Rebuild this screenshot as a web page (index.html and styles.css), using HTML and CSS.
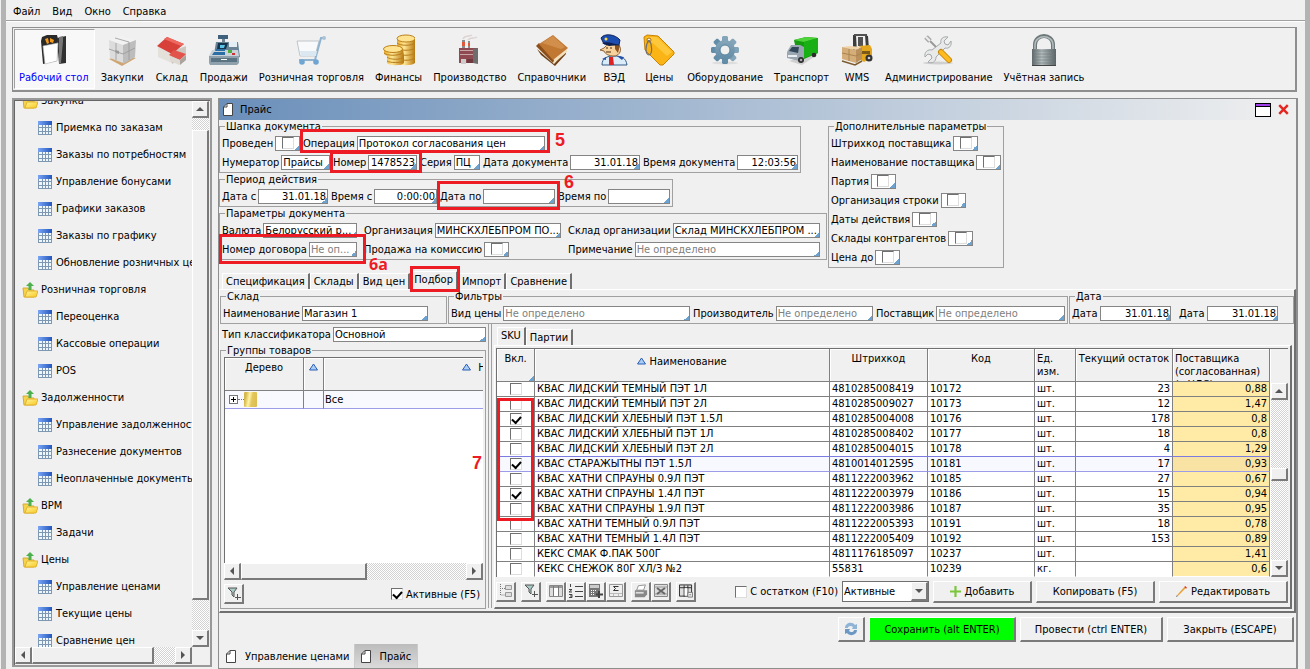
FILE: index.html
```
<!DOCTYPE html>
<html lang="ru">
<head>
  <meta charset="utf-8">
  <title>Прайс</title>
  <link rel="stylesheet" href="styles.css">
</head>
<body>
  <!-- icon set -->
  <svg class="defs" aria-hidden="true">
    <defs>
      <linearGradient id="gold" x1="0" x2="1"><stop offset="0" stop-color="#e9a92c"/><stop offset=".4" stop-color="#ffe694"/><stop offset="1" stop-color="#b8780f"/></linearGradient>
      <linearGradient id="steel" x1="0" x2="1"><stop offset="0" stop-color="#5d6668"/><stop offset=".4" stop-color="#b4bcbe"/><stop offset="1" stop-color="#596264"/></linearGradient>
      <linearGradient id="tableTop" x1="0" x2="1"><stop offset="0" stop-color="#79a5f5"/><stop offset="1" stop-color="#2457bd"/></linearGradient>
      <linearGradient id="folderFill" x1="0" x2="1" y2="1"><stop offset="0" stop-color="#fff59a"/><stop offset="1" stop-color="#f7c81e"/></linearGradient>
      <linearGradient id="gearFill" y2="1" x2="0"><stop offset="0" stop-color="#86a6ba"/><stop offset="1" stop-color="#5f8ba6"/></linearGradient>
    </defs>
    <symbol id="i-desk" viewBox="0 0 32 32">
      <path d="M3 7l1-4 5-2h10l1 4-1 22-14 3z" fill="#2a2a2a"/><path d="M19 4l9-2v27l-7 1z" fill="#303030"/><path d="M21 3l4-1v5l-2 22-2 1z" fill="#777"/>
      <path d="M5 12l15-3-1 18L7 30z" fill="#fff" stroke="#bbb" stroke-width=".6"/><path d="M7 5l3-1 1 5-2 1zM12 4l4 2-1 3-3-1z" fill="#f39a1c"/>
    </symbol>
    <symbol id="i-box" viewBox="0 0 32 32">
      <path d="M3 25l13-4 14 3-14 8z" fill="#cfa673"/><path d="M3 6l13-4 14 4-13 5z" fill="#f2f2f2"/><path d="M3 6l14 5v18L4 24z" fill="#dcdcdc"/><path d="M17 11l13-5-1 17-12 7z" fill="#bdbdbd"/>
      <path d="M3 15l14 5 12-6M10 9v17M9 4l14 4v18" fill="none" stroke="#979797" stroke-width=".8"/><path d="M9 16l4 1v3l-3-1z" fill="#999"/>
    </symbol>
    <symbol id="i-house" viewBox="0 0 32 32">
      <path d="M2 12l14 7v10L2 23z" fill="#e4e0da"/><path d="M14 18l16-6v10l-14 8z" fill="#cdc7bf"/><path d="M1 12L11 3l17 7-12 10z" fill="#d8403a"/><path d="M11 3l17 7-3 2L8 5z" fill="#ee6a60"/>
      <path d="M13 21l5-5 12 4-6 6z" fill="#e2544b"/><path d="M14 22l10 4 6-5v5l-7 5-9-4z" fill="#dedad3"/><path d="M24 26l6-5v5l-6 5z" fill="#aaa49c"/>
    </symbol>
    <symbol id="i-cash" viewBox="0 0 32 32">
      <path d="M10 1h10v4H10z" fill="#3f617b"/><path d="M14 5h3v4h-3z" fill="#6f8494"/><path d="M8 8h22l2 15-8 2-18-5z" fill="#6a8496"/><path d="M10 9h10l-2 6H9z" fill="#16344b"/><path d="M12 11h5l-1 3h-4z" fill="#5bc3ea"/><path d="M21 8h8v5h-8z" fill="#e4eef4"/>
      <path d="M4 16h26l1 6H1z" fill="#c8d2d8"/><path d="M6 18h11v3H4zM8 15h9v2H7z" fill="#2b6fa5"/><path d="M20 16h4v3h-4z" fill="#4fae3d"/><path d="M24 19h3v2h-3z" fill="#c33"/><path d="M1 22h30v7l-2 2H2l-1-2z" fill="#8fa1ac"/><path d="M3 24h26v4H3z" fill="#5b7484"/><path d="M13 25h6v1h-6z" fill="#fff"/>
    </symbol>
    <symbol id="i-cart" viewBox="0 0 32 32">
      <path d="M2 7h22l-4 15H5z" fill="#f8f9fa" stroke="#c0c6ca"/><path d="M30 4h-4l-6 22H4" fill="none" stroke="#8fb3cf" stroke-width="2"/><path d="M5 17h17l-1 5H6z" fill="#dbe8f2"/>
      <circle cx="7" cy="28" r="2.8" fill="#6ea5d2"/><circle cx="21" cy="28" r="2.8" fill="#6ea5d2"/><circle cx="29" cy="4" r="2" fill="#a9c4d8"/>
    </symbol>
    <symbol id="i-coins" viewBox="0 0 32 32">
      <path d="M14 5v24c3 3 15 3 18 0V5z" fill="url(#gold)"/><ellipse cx="23" cy="4.500" rx="9" ry="3.500" fill="#ffe391" stroke="#bb8018"/><path d="M14 9c3 3 15 3 18 0M14 14c3 3 15 3 18 0M14 19c3 3 15 3 18 0M14 24c3 3 15 3 18 0" fill="none" stroke="#b57e1c"/>
      <path d="M1 15v5l3 2v7c3 3 14 3 17 0v-7l-1-7z" fill="url(#gold)"/><ellipse cx="10" cy="15" rx="9.500" ry="3.500" fill="#ffe391" stroke="#bb8018"/><path d="M1 19c3 3 15 3 18 0M4 23c3 3 14 3 17 0M4 27c3 2 14 2 17 0" fill="none" stroke="#b57e1c"/>
    </symbol>
    <symbol id="i-factory" viewBox="0 0 32 32">
      <path d="M9 5c2-4 6-2 9-4M14 6c2-3 6-1 9-3" fill="none" stroke="#ddd3d3" stroke-width="1.500"/><path d="M8 6h3v9H8zM14 7h2v8h-2z" fill="#8b8b8b"/><path d="M8 8h3v4H8zM14 9h2v3h-2z" fill="#e1573a"/><path d="M5 14h19v15H5z" fill="#8e4a50"/><path d="M19 15l5-1v16l-5-1z" fill="#6d6d6d"/>
      <path d="M6 16h13v1H6zM6 20h13v1H6z" fill="#c9a5a8"/><path d="M7 25h5v5H7z" fill="#ccc"/><path d="M13 25h6v4h-6z" fill="#6e3a40"/>
    </symbol>
    <symbol id="i-book" viewBox="0 0 32 32">
      <path d="M1 15l17 15 12-13v3L19 32 5 21z" fill="#704016"/><path d="M2 11l15 15 14-11v3L18 29 2 15z" fill="#f4dfbb"/><path d="M0 12l3-3 15 17-1 3z" fill="#8b4f1b"/><path d="M3 10L17 1l15 13-15 12z" fill="#c07833"/><path d="M6 9l11-7 12 11-4 2z" fill="#d28f4c"/>
    </symbol>
    <symbol id="i-officer" viewBox="0 0 32 32">
      <path d="M4 31c0-7 5-9 12-9 8 0 12 2 13 9z" fill="#d9ecf8" stroke="#355b86"/><path d="M8 12c0-2 14-2 14 1 2 5-2 9-6 9-5 0-9-2-10-5l-4-1 4-2z" fill="#f8d29b" stroke="#754a1e" stroke-width=".8"/><path d="M17 10l5 1-2 8-3-4z" fill="#8b531e"/><path d="M3 4c3-5 14-4 19 2l-1 5-15-1z" fill="#1c4eb0" stroke="#10265e"/><path d="M4 9c5-2 11 0 16 2l-9 1z" fill="#0d1f4f"/><circle cx="8" cy="5" r="1.500" fill="#ffd84a"/>
      <path d="M11 23h4l1 8h-5z" fill="#d22"/><path d="M19 22l7 1-2 3zM4 25l4-2v3z" fill="#224fa8"/><path d="M8 14h2M12 14h2M8 18h5" stroke="#4a2a10"/>
    </symbol>
    <symbol id="i-tag" viewBox="0 0 32 32">
      <path d="M1 3l3-2 11 1 16 16v2L20 31h-3L2 16z" fill="#fbb415" stroke="#c98206"/><path d="M3 3h11l15 15-5 4z" fill="#ffd04a" opacity=".7"/><circle cx="6" cy="6" r="2" fill="#fff" stroke="#a56d08"/><path d="M6 6c3 4 4 14 0 15-4-1-4-10 0-15" fill="none" stroke="#6e6e6e" stroke-width="1.200"/>
    </symbol>
    <symbol id="i-gear" viewBox="0 0 32 32">
      <ellipse cx="16" cy="29" rx="13" ry="1.500" fill="#ddd"/>
      <g fill="url(#gearFill)"><path d="M13 3l1-1h4l1 1v26l-1 1h-4l-1-1z"/><path d="M13 3l1-1h4l1 1v26l-1 1h-4l-1-1z" transform="rotate(45 16 16)"/><path d="M13 3l1-1h4l1 1v26l-1 1h-4l-1-1z" transform="rotate(90 16 16)"/><path d="M13 3l1-1h4l1 1v26l-1 1h-4l-1-1z" transform="rotate(135 16 16)"/><circle cx="16" cy="16" r="10"/></g>
      <circle cx="16" cy="16" r="5" fill="#f0f0f0" stroke="#5a839d"/>
    </symbol>
    <symbol id="i-truck" viewBox="0 0 32 32">
      <path d="M3 27l13 4 15-10-3-2z" fill="#cfcfcf"/><path d="M8 6l12-3 12 1v15l-14 6-8-9z" fill="#159a12"/><path d="M8 6l12-3 12 1-14 4z" fill="#4fd33a"/><path d="M18 8l14-4v15l-14 5z" fill="#19b016"/>
      <path d="M1 18l4-7h9l4 2v11l-5 3-12-3z" fill="#9aa7b2"/><path d="M3 17l3-4h7l-1 6z" fill="#33475a"/><path d="M2 21h9v2H2z" fill="#e7edf1"/><circle cx="15" cy="26" r="3" fill="#2d2d2d"/><circle cx="15" cy="26" r="1.300" fill="#aaa"/><circle cx="28" cy="21" r="2.300" fill="#2d2d2d"/>
    </symbol>
    <symbol id="i-lift" viewBox="0 0 32 32">
      <path d="M12 1h3l1 18h-4zM24 1l3 1 1 13h-3z" fill="#3c3c3c"/><path d="M13 0h13v2H13zM17 3h5v9h-5z" fill="#525252"/><path d="M18 12l11-1 2 4v9l-8 4-5-3z" fill="#e3a61d"/><path d="M20 17h9v3h-9z" fill="#7a5a17"/><circle cx="28" cy="24" r="3.500" fill="#333"/><circle cx="28" cy="24" r="1.300" fill="#ccc"/>
      <path d="M1 13l8-1 12 1-6 3z" fill="#f0d3a7"/><path d="M1 13l14 3v13L1 25z" fill="#d5ad79"/><path d="M15 16l6-3v12l-6 4z" fill="#b98f5b"/><path d="M1 19l14 3 6-3M8 15v12" stroke="#a98450" fill="none"/><path d="M1 27l13 4 7-4" stroke="#7c5a2e" fill="none" stroke-width="1.500"/>
    </symbol>
    <symbol id="i-tools" viewBox="0 0 32 32">
      <ellipse cx="15" cy="29" rx="15" ry="1.500" fill="#cfcfcf"/><path d="M5 5l13 13" stroke="#999" stroke-width="2"/><path d="M3 3l4 4" stroke="#aaa" stroke-width="5"/><path d="M3 3l4 4" stroke="#eee" stroke-width="2"/>
      <path d="M25 3l-4 4 1 3 3 1 3-4c1 5-2 8-6 7l-9 9c0 5-4 7-8 5l4-4-1-3-3-1-3 3c-1-5 3-8 7-7l9-7c-1-4 2-7 7-6z" fill="#e8e9e9" stroke="#a4a8aa"/><path d="M18 18l8 8" stroke="#c78607" stroke-width="6" stroke-linecap="round"/><path d="M18 18l8 8" stroke="#fdbb20" stroke-width="4" stroke-linecap="round"/>
    </symbol>
    <symbol id="i-lock" viewBox="0 0 32 32">
      <path d="M7 17v-6c0-12 18-12 18 0v6" fill="none" stroke="#6e787a" stroke-width="4"/><path d="M7 17v-6c0-11 18-11 18 0v6" fill="none" stroke="#b3bcbd" stroke-width="1.500"/><path d="M4 15h24v17H4z" fill="url(#steel)"/><path d="M4 17h24M4 20h24M4 23h24M4 26h24M4 29h24" stroke="#6d7779" opacity=".55"/><path d="M4 31h24v1H4z" fill="#444"/>
    </symbol>
    <symbol id="i-folder" viewBox="0 0 16 16">
      <path d="M1 6h5l1 2h5v7H2z" fill="#f5d34a" stroke="#d9aa32"/><path d="M3 15l2-6h11l-2 6z" fill="url(#folderFill)" stroke="#e3b430"/><path d="M8 0l4 4H9.500v4h-3V4H4z" fill="#4db04c"/>
    </symbol>
    <symbol id="i-table" viewBox="0 0 14 14">
      <path d="M0 0h14v14H0z" fill="#7e98b4"/><path d="M0 0h14v4H0z" fill="url(#tableTop)"/><path d="M1 4h3v2H1zM5 4h2v2H5zM8 4h2v2H8zM11 4h2v2h-2zM1 7h3v3H1zM5 7h2v3H5zM8 7h2v3H8zM11 7h2v3h-2zM1 11h3v2H1zM5 11h2v2H5zM8 11h2v2H8zM11 11h2v2h-2z" fill="#eef7fb"/>
    </symbol>
    <symbol id="i-page" viewBox="0 0 10 13"><path d="M4 .5h5.500v12H.5V4z" fill="#fff" stroke="#444"/><path d="M4 .5V4H.5" fill="none" stroke="#444"/></symbol>
    <symbol id="i-sort" viewBox="0 0 9 8"><path d="M4.500 1L8.500 7h-8z" fill="#a9cdf6" stroke="#2d5fb4"/></symbol>
    <symbol id="i-funnel" viewBox="0 0 14 14"><path d="M1 1h9L7 5v5L5 8V5z" fill="#a9cbc8" stroke="#555"/><path d="M10.500 7v6M8 10.500h6" stroke="#555"/></symbol>
    <symbol id="i-tree" viewBox="0 0 14 14"><path d="M1.500 0v11H6M1 4.500h5" fill="none" stroke="#777" stroke-dasharray="1 1"/><path d="M6.500 1.500h6v4h-6zM6.500 8.500h6v4h-6z" fill="#ddd" stroke="#999"/></symbol>
    <symbol id="i-cols" viewBox="0 0 14 14"><path d="M.5 1.500h13v11H.5z" fill="#ddd" stroke="#888"/><path d="M1 2h12v2H1z" fill="#999"/><path d="M5 4h4v8H5z" fill="#fff"/><path d="M4.500 2v10M9.500 2v10" stroke="#777"/></symbol>
    <symbol id="i-list" viewBox="0 0 14 14"><path d="M6 2.500h8M6 7.500h8M6 12.500h8M1.500 0v3M0 5.500h3L0 8h3M0 10.500h3v3H0M1 12h2" fill="none" stroke="#444"/></symbol>
    <symbol id="i-calc" viewBox="0 0 14 14"><path d="M0 0h11v13H0z" fill="#777"/><path d="M1 1h9v3H1z" fill="#ccc"/><path d="M2 6h1v1H2zM4 6h1v1H4zM6 6h1v1H6zM2 8h1v1H2zM4 8h1v1H4zM2 10h1v1H2zM4 10h1v1H4z" fill="#fff"/><path d="M10 7v7M7 10.500h7" stroke="#444" stroke-width="2"/></symbol>
    <symbol id="i-sum" viewBox="0 0 14 14"><path d="M.5.5h13v12H.5z" fill="#eee" stroke="#999"/><path d="M1 9.500h12M4.500 9v3M9.500 9v3" stroke="#bbb"/><path d="M9.500 2.500h-5l2 2-2 2h5" fill="none" stroke="#333"/></symbol>
    <symbol id="i-print" viewBox="0 0 16 14"><path d="M5 1l8-1-2 6H3z" fill="#fff" stroke="#888"/><path d="M1 6h14v5l-3 3H1z" fill="#888"/><path d="M2 8h9v2H2z" fill="#ddd"/></symbol>
    <symbol id="i-xls" viewBox="0 0 14 14"><path d="M.5.500h13v12H.5z" fill="#ddd" stroke="#888"/><path d="M1 3h12M1 10h12" stroke="#999"/><path d="M3 4l8 6M11 4l-8 6" stroke="#666" stroke-width="2"/></symbol>
    <symbol id="i-grid" viewBox="0 0 15 14"><path d="M.5.500h13v12H.5z" fill="#ddd" stroke="#222"/><path d="M1 3.500h12M5.500 1v12M9.500 1v12" stroke="#222"/><path d="M6 4h3v8H6z" fill="#fff"/><path d="M9.500 8.500h5v5h-5z" fill="#eee" stroke="#777"/><path d="M11 11h2" stroke="#777"/></symbol>
    <symbol id="i-plus" viewBox="0 0 10 10"><path d="M4 0h2v4h4v2H6v4H4V6H0V4h4z" fill="#7cc63c"/></symbol>
    <symbol id="i-pencil" viewBox="0 0 12 12"><path d="M1 11l1-2 7-8 2 1-8 8z" fill="#e8a33a"/><path d="M9 1l1-1 2 2-1 1z" fill="#d33"/><path d="M0 12l1-2 1 1z" fill="#444"/></symbol>
    <symbol id="i-refresh" viewBox="0 0 14 14"><path d="M1 6c0-5 7-7 10-3l2-1v5H8l1-2C7 3 4 4 4 6z" fill="#8fb4d6"/><path d="M13 8c0 5-7 7-10 3l-2 1V7h5L5 9c2 2 5 1 5-1z" fill="#6c98c4"/></symbol>
  </svg>

  <div class="window">
    <nav class="menubar">
      <a href="#">Файл</a>
      <a href="#">Вид</a>
      <a href="#">Окно</a>
      <a href="#">Справка</a>
    </nav>

    <div class="toolbar">
      <button class="tool active"><svg><use href="#i-desk"/></svg>Рабочий стол</button>
      <button class="tool"><svg><use href="#i-box"/></svg>Закупки</button>
      <button class="tool"><svg><use href="#i-house"/></svg>Склад</button>
      <button class="tool"><svg><use href="#i-cash"/></svg>Продажи</button>
      <button class="tool"><svg><use href="#i-cart"/></svg>Розничная торговля</button>
      <button class="tool"><svg><use href="#i-coins"/></svg>Финансы</button>
      <button class="tool"><svg><use href="#i-factory"/></svg>Производство</button>
      <button class="tool"><svg><use href="#i-book"/></svg>Справочники</button>
      <button class="tool"><svg><use href="#i-officer"/></svg>ВЭД</button>
      <button class="tool"><svg><use href="#i-tag"/></svg>Цены</button>
      <button class="tool"><svg><use href="#i-gear"/></svg>Оборудование</button>
      <button class="tool"><svg><use href="#i-truck"/></svg>Транспорт</button>
      <button class="tool"><svg><use href="#i-lift"/></svg>WMS</button>
      <button class="tool"><svg><use href="#i-tools"/></svg>Администрирование</button>
      <button class="tool"><svg><use href="#i-lock"/></svg>Учётная запись</button>
    </div>

    <div class="workspace">
      <aside class="sidebar">
        <ul class="tree">
          <li class="folder"><svg><use href="#i-folder"/></svg>Закупка</li>
          <li><svg><use href="#i-table"/></svg>Приемка по заказам</li>
          <li><svg><use href="#i-table"/></svg>Заказы по потребностям</li>
          <li><svg><use href="#i-table"/></svg>Управление бонусами</li>
          <li><svg><use href="#i-table"/></svg>Графики заказов</li>
          <li><svg><use href="#i-table"/></svg>Заказы по графику</li>
          <li><svg><use href="#i-table"/></svg>Обновление розничных цен</li>
          <li class="folder"><svg><use href="#i-folder"/></svg>Розничная торговля</li>
          <li><svg><use href="#i-table"/></svg>Переоценка</li>
          <li><svg><use href="#i-table"/></svg>Кассовые операции</li>
          <li><svg><use href="#i-table"/></svg>POS</li>
          <li class="folder"><svg><use href="#i-folder"/></svg>Задолженности</li>
          <li><svg><use href="#i-table"/></svg>Управление задолженностью</li>
          <li><svg><use href="#i-table"/></svg>Разнесение документов</li>
          <li><svg><use href="#i-table"/></svg>Неоплаченные документы</li>
          <li class="folder"><svg><use href="#i-folder"/></svg>BPM</li>
          <li><svg><use href="#i-table"/></svg>Задачи</li>
          <li class="folder"><svg><use href="#i-folder"/></svg>Цены</li>
          <li><svg><use href="#i-table"/></svg>Управление ценами</li>
          <li><svg><use href="#i-table"/></svg>Текущие цены</li>
          <li><svg><use href="#i-table"/></svg>Сравнение цен</li>
        </ul>
        <div class="scroll vertical side-v"><button class="arrow up" aria-label="Вверх"></button><div class="track"><div class="thumb"></div></div><button class="arrow down" aria-label="Вниз"></button></div>
        <div class="scroll side-h"><button class="arrow left" aria-label="Влево"></button><div class="track"><div class="thumb"></div></div><button class="arrow right" aria-label="Вправо"></button></div>
      </aside>

      <main class="document">
        <header class="titlebar">
          <svg class="page-icon"><use href="#i-page"/></svg>
          <span>Прайс</span>
          <button class="maximize" aria-label="Развернуть"></button>
          <button class="close" aria-label="Закрыть"><svg viewBox="0 0 9 9"><path d="M1 1l7 7M8 1L1 8" stroke="#e5261f" stroke-width="2"/></svg></button>
        </header>

        <div class="forms">
          <div class="forms-left">
            <fieldset class="fit">
              <legend>Шапка документа</legend>
              <div class="row">
                <label class="field f-posted">Проведен <span class="checkfield"><input type="checkbox"></span></label>
                <label class="field f-operation">Операция <input type="text" value="Протокол согласования цен"></label>
              </div>
              <div class="row">
                <label class="field f-numerator">Нумератор <input type="text" value="Прайсы"></label>
                <label class="field f-number">Номер <input type="text" class="right" value="1478523"></label>
                <label class="field f-series">Серия <input type="text" value="ПЦ"></label>
                <label class="field f-docdate">Дата документа <input type="text" class="right" value="31.01.18"></label>
                <label class="field f-doctime">Время документа <input type="text" class="right" value="12:03:56"></label>
              </div>
            </fieldset>
            <fieldset class="fit">
              <legend>Период действия</legend>
              <div class="row">
                <label class="field f-from">Дата с <input type="text" class="right" value="31.01.18"></label>
                <label class="field f-from">Время с <input type="text" class="right" value="0:00:00"></label>
                <label class="field f-todate">Дата по <input type="text"></label>
                <label class="field f-totime">Время по <input type="text"></label>
              </div>
            </fieldset>
            <fieldset>
              <legend>Параметры документа</legend>
              <div class="params">
                <label class="field">Валюта <input type="text" value="Белорусский р..."></label>
                <label class="field">Организация <input type="text" value="МИНСКХЛЕБПРОМ ПО..."></label>
                <label class="field">Склад организации <input type="text" value="Склад МИНСКХЛЕБПРОМ ..."></label>
                <label class="field">Номер договора <input type="text" placeholder="Не оп..."></label>
                <label class="field">Продажа на комиссию <span class="checkfield"><input type="checkbox"></span></label>
                <label class="field">Примечание <input type="text" placeholder="Не определено"></label>
              </div>
            </fieldset>
          </div>
          <fieldset class="extra">
            <legend>Дополнительные параметры</legend>
            <div class="row"><label class="field">Штрихкод поставщика <span class="checkfield"><input type="checkbox"></span></label></div>
            <div class="row"><label class="field">Наименование поставщика <span class="checkfield"><input type="checkbox"></span></label></div>
            <div class="row"><label class="field">Партия <span class="checkfield"><input type="checkbox"></span></label></div>
            <div class="row"><label class="field">Организация строки <span class="checkfield"><input type="checkbox"></span></label></div>
            <div class="row"><label class="field">Даты действия <span class="checkfield"><input type="checkbox"></span></label></div>
            <div class="row"><label class="field">Склады контрагентов <span class="checkfield"><input type="checkbox"></span></label></div>
            <div class="row"><label class="field">Цена до <span class="checkfield"><input type="checkbox"></span></label></div>
          </fieldset>
        </div>

        <div class="tabs">
          <button>Спецификация</button>
          <button>Склады</button>
          <button>Вид цен</button>
          <button class="selected">Подбор</button>
          <button>Импорт</button>
          <button>Сравнение</button>
        </div>

        <section class="panel">
          <div class="filters">
            <fieldset class="g-store">
              <legend>Склад</legend>
              <div class="row"><label class="field">Наименование <input type="text" value="Магазин 1"></label></div>
            </fieldset>
            <fieldset class="g-filters">
              <legend>Фильтры</legend>
              <div class="row">
                <label class="field f-price">Вид цены <input type="text" placeholder="Не определено"></label>
                <label class="field f-maker">Производитель <input type="text" placeholder="Не определено"></label>
                <label class="field f-supplier">Поставщик <input type="text" placeholder="Не определено"></label>
              </div>
            </fieldset>
            <fieldset class="g-dates">
              <legend>Дата</legend>
              <div class="row">
                <label class="field">Дата <input type="text" class="right" value="31.01.18"></label>
                <label class="field">Дата <input type="text" class="right" value="31.01.18"></label>
              </div>
            </fieldset>
          </div>

          <div class="split">
            <div class="groups-pane">
              <div class="row"><label class="field">Тип классификатора <input type="text" value="Основной"></label></div>
              <fieldset class="groups">
                <legend>Группы товаров</legend>
                <div class="groups-body">
                  <div class="groups-view">
                    <table class="groups-table">
                      <thead><tr><th class="c-tree">Дерево</th><th class="c-sort"><svg class="sort"><use href="#i-sort"/></svg></th><th class="c-title"><svg class="sort"><use href="#i-sort"/></svg> Наименование</th></tr></thead>
                      <tbody><tr><td><span class="node"><i class="expander"></i><i class="dots"></i><i class="folder-icon"></i></span></td><td></td><td>Все</td></tr></tbody>
                    </table>
                  </div>
                  <div class="scroll groups-h"><button class="arrow left" aria-label="Влево"></button><div class="track"><div class="thumb"></div></div><button class="arrow right" aria-label="Вправо"></button></div>
                  <div class="groups-bar">
                    <button class="icon-btn" aria-label="Фильтр"><svg><use href="#i-funnel"/></svg></button>
                    <label class="check"><input type="checkbox" checked> Активные (F5)</label>
                  </div>
                </div>
              </fieldset>
            </div>
            <div class="splitter"></div>
            <div class="sku-pane">
              <div class="tabs small">
                <button class="selected">SKU</button>
                <button>Партии</button>
              </div>
              <div class="sku-body">
                <div class="sku-view">
                  <table class="sku">
                    <colgroup><col class="w-on"><col><col class="w-code"><col class="w-id"><col class="w-unit"><col class="w-rest"><col class="w-rest"></colgroup>
                    <thead>
                      <tr>
                        <th class="filtered">Вкл.</th>
                        <th class="name"><svg class="sort"><use href="#i-sort"/></svg> Наименование</th>
                        <th>Штрихкод</th><th>Код</th><th class="l">Ед.<br>изм.</th><th>Текущий остаток</th><th class="l">Поставщика (согласованная) (с НДС)</th>
                      </tr>
                    </thead>
                    <tbody>
                      <tr><td><input type="checkbox" aria-label="Вкл."></td><td>КВАС ЛИДСКИЙ ТЕМНЫЙ ПЭТ 1Л</td><td>4810285008419</td><td>10172</td><td>шт.</td><td>23</td><td>0,88</td></tr>
                      <tr><td><input type="checkbox" aria-label="Вкл."></td><td>КВАС ЛИДСКИЙ ТЕМНЫЙ ПЭТ 2Л</td><td>4810285009027</td><td>10173</td><td>шт.</td><td>12</td><td>1,47</td></tr>
                      <tr><td><input type="checkbox" aria-label="Вкл." checked></td><td>КВАС ЛИДСКИЙ ХЛЕБНЫЙ ПЭТ 1.5Л</td><td>4810285004008</td><td>10176</td><td>шт.</td><td>178</td><td>0,8</td></tr>
                      <tr><td><input type="checkbox" aria-label="Вкл."></td><td>КВАС ЛИДСКИЙ ХЛЕБНЫЙ ПЭТ 1Л</td><td>4810285008402</td><td>10177</td><td>шт.</td><td>18</td><td>0,8</td></tr>
                      <tr><td><input type="checkbox" aria-label="Вкл."></td><td>КВАС ЛИДСКИЙ ХЛЕБНЫЙ ПЭТ 2Л</td><td>4810285004015</td><td>10178</td><td>шт.</td><td>4</td><td>1,29</td></tr>
                      <tr class="current"><td><input type="checkbox" aria-label="Вкл." checked></td><td>КВАС СТАРАЖЫТНЫ ПЭТ 1.5Л</td><td>4810014012595</td><td>10181</td><td>шт.</td><td>17</td><td>0,93</td></tr>
                      <tr><td><input type="checkbox" aria-label="Вкл."></td><td>КВАС ХАТНИ СПРАУНЫ 0.9Л ПЭТ</td><td>4811222003962</td><td>10185</td><td>шт.</td><td>27</td><td>0,67</td></tr>
                      <tr><td><input type="checkbox" aria-label="Вкл." checked></td><td>КВАС ХАТНИ СПРАУНЫ 1.4Л ПЭТ</td><td>4811222003979</td><td>10186</td><td>шт.</td><td>15</td><td>0,94</td></tr>
                      <tr><td><input type="checkbox" aria-label="Вкл."></td><td>КВАС ХАТНИ СПРАУНЫ 1.9Л ПЭТ</td><td>4811222003986</td><td>10187</td><td>шт.</td><td>35</td><td>0,95</td></tr>
                      <tr><td><input type="checkbox" aria-label="Вкл."></td><td>КВАС ХАТНИ ТЕМНЫЙ 0.9Л ПЭТ</td><td>4811222005393</td><td>10191</td><td>шт.</td><td>18</td><td>0,78</td></tr>
                      <tr><td><input type="checkbox" aria-label="Вкл."></td><td>КВАС ХАТНИ ТЕМНЫЙ 1.4Л ПЭТ</td><td>4811222005409</td><td>10192</td><td>шт.</td><td>153</td><td>0,89</td></tr>
                      <tr><td><input type="checkbox" aria-label="Вкл."></td><td>КЕКС СМАК Ф.ПАК 500Г</td><td>4811176185097</td><td>10237</td><td>шт.</td><td></td><td>1,41</td></tr>
                      <tr><td><input type="checkbox" aria-label="Вкл."></td><td>КЕКС СНЕЖОК 80Г ХЛ/З №2</td><td>55831</td><td>10239</td><td>кг.</td><td></td><td>0,6</td></tr>
                    </tbody>
                  </table>
                  <div class="scroll vertical sku-v"><button class="arrow up" aria-label="Вверх"></button><div class="track"><div class="thumb"></div></div><button class="arrow down" aria-label="Вниз"></button></div>
                </div>
                <div class="sku-bar">
                  <div class="btn-group"><button class="icon-btn" aria-label="Дерево"><svg><use href="#i-tree"/></svg></button></div>
                  <div class="btn-group"><button class="icon-btn" aria-label="Фильтр"><svg><use href="#i-funnel"/></svg></button></div>
                  <div class="btn-group">
                    <button class="icon-btn" aria-label="Колонки"><svg><use href="#i-cols"/></svg></button>
                    <button class="icon-btn" aria-label="Количество"><svg><use href="#i-list"/></svg></button>
                    <button class="icon-btn" aria-label="Расчет"><svg><use href="#i-calc"/></svg></button>
                    <button class="icon-btn" aria-label="Сумма"><svg><use href="#i-sum"/></svg></button>
                  </div>
                  <div class="btn-group">
                    <button class="icon-btn" aria-label="Печать"><svg><use href="#i-print"/></svg></button>
                    <button class="icon-btn" aria-label="Excel"><svg><use href="#i-xls"/></svg></button>
                  </div>
                  <div class="btn-group"><button class="icon-btn" aria-label="Настройка"><svg><use href="#i-grid"/></svg></button></div>
                  <label class="check push"><input type="checkbox"> С остатком (F10)</label>
                  <span class="combo"><select aria-label="Показать"><option>Активные</option></select><span class="arrow down"></span></span>
                  <button class="btn b-add"><svg class="btn-icon"><use href="#i-plus"/></svg>Добавить</button>
                  <button class="btn b-copy">Копировать (F5)</button>
                  <button class="btn b-edit"><svg class="btn-icon"><use href="#i-pencil"/></svg>Редактировать</button>
                </div>
              </div>
            </div>
          </div>
        </section>

        <div class="actions">
          <button class="btn b-refresh" aria-label="Обновить"><svg><use href="#i-refresh"/></svg></button>
          <button class="btn b-save">Сохранить (alt ENTER)</button>
          <button class="btn b-post">Провести (ctrl ENTER)</button>
          <button class="btn b-close">Закрыть (ESCAPE)</button>
        </div>
        <div class="pages">
          <button><svg class="page-icon"><use href="#i-page"/></svg>Управление ценами</button>
          <button class="selected"><svg class="page-icon"><use href="#i-page"/></svg>Прайс</button>
        </div>

        <!-- callouts over the form -->
        <div class="mark m-operation"></div><b class="num n-5">5</b>
        <div class="mark m-number"></div>
        <div class="mark m-dateto"></div><b class="num n-6">6</b>
        <div class="mark m-contract"></div><b class="num n-6a">6а</b>
        <div class="mark m-tab"></div>
        <div class="mark m-checks"></div><b class="num n-7">7</b>
      </main>
    </div>
  </div>
</body>
</html>
```

FILE: styles.css
```
* {
  box-sizing: border-box;
}

body {
  margin: 0;
  height: 100vh;
  overflow: hidden;
  background: #f0f0f0;
  color: #000;
  font: 11px/13px "DejaVu Sans Condensed", "DejaVu Sans", sans-serif;
}

button, input, select {
  font: inherit;
  color: inherit;
  margin: 0;
}

button {
  border: 0;
  padding: 0;
  background: none;
}

.defs {
  position: absolute;
  width: 0;
  height: 0;
}

.window {
  display: flex;
  flex-direction: column;
  height: 100vh;
  margin-left: 1px;
  border-left: 5px solid #b3b3b3;
  border-right: 5px solid #b3b3b3;
}

/* menu */
.menubar {
  display: flex;
  gap: 12px;
  height: 21px;
  padding: 5px 7px 0;
  border-bottom: 1px solid #a0a0a0;
  box-shadow: 0 1px 0 #fff;
}

.menubar a {
  color: #000;
  text-decoration: none;
}

/* main toolbar */
.toolbar {
  display: flex;
  height: 65px;
  margin: 6px 8px 6px 6px;
  padding: 1px;
  border: 1px solid #8e8e8e;
  border-right-width: 2px;
  border-bottom-width: 2px;
  flex-shrink: 0;
}

.tool {
  display: flex;
  flex-direction: column;
  align-items: center;
  gap: 5px;
  min-width: 45px;
  padding: 5px 5px 0 6px;
  white-space: nowrap;
}

.tool svg {
  width: 32px;
  height: 32px;
}

.tool.active {
  color: #00f;
  background: #f8f8f8;
  border: 1px solid #a0a0a0;
  border-right-color: #fff;
  border-bottom-color: #fff;
  padding: 4px 5px 0 4px;
}

.workspace {
  display: flex;
  gap: 6px;
  flex: 1;
  min-height: 0;
  margin: 0 7px 0 6px;
}

/* sidebar */
.sidebar {
  display: grid;
  grid-template: 1fr 17px / 1fr 17px;
  width: 200px;
  flex-shrink: 0;
  margin-bottom: 2px;
  border: 2px solid #999;
  box-shadow: inset 1px 1px 0 #666;
  padding: 1px;
}

.tree {
  overflow: hidden;
  margin: 0;
  padding: 0;
  list-style: none;
}

.tree li {
  display: flex;
  align-items: center;
  gap: 4px;
  height: 27px;
  padding-left: 23px;
  white-space: nowrap;
}

.tree li:first-child {
  margin-top: -14px;
}

.tree li.folder {
  gap: 3px;
  padding-left: 7px;
}

.tree svg {
  flex: none;
  width: 14px;
  height: 14px;
}

.tree .folder svg {
  width: 16px;
  height: 16px;
}

/* scrollbars */
.scroll {
  display: flex;
  height: 17px;
}

.scroll.vertical {
  flex-direction: column;
  width: 17px;
  height: auto;
}

.arrow {
  display: grid;
  place-items: center;
  flex: none;
  width: 17px;
  height: 17px;
  background: #f0f0f0;
}

.arrow, .thumb, .icon-btn, .btn {
  border: 1px solid #fff;
  border-right: 2px solid #7a7a7a;
  border-bottom: 2px solid #7a7a7a;
}

.arrow::after {
  content: "";
  border: 4px solid transparent;
}

.arrow.up::after { border-bottom-color: #555; border-top: 0; }
.arrow.down::after { border-top-color: #555; border-bottom: 0; }
.arrow.left::after { border-right-color: #555; border-left: 0; }
.arrow.right::after { border-left-color: #555; border-right: 0; }

.track {
  flex: 1;
  min-width: 0;
  min-height: 0;
  background: repeating-conic-gradient(#fff 0 25%, #d2d2d2 0 50%) 0 0 / 2px 2px;
}

.thumb {
  height: 100%;
  background: #f0f0f0;
}

.side-v .track { padding: 12px 0 30px; }
.side-h { grid-column: 1; }
.side-h .thumb { width: 85%; }
.groups-h .thumb { width: 56%; }
.sku-v .track { padding-top: 68px; }
.sku-v .thumb { height: 13px; }

/* document window */
.document {
  position: relative;
  display: flex;
  flex-direction: column;
  flex: 1;
  min-width: 0;
  border: 1px solid #8e8e8e;
  border-right-width: 2px;
}

.titlebar {
  display: flex;
  align-items: center;
  gap: 7px;
  height: 21px;
  flex-shrink: 0;
  padding: 0 7px 0 4px;
  background: linear-gradient(90deg, #6a8fba, #f0f0f0);
}

.page-icon {
  width: 10px;
  height: 13px;
}

.maximize {
  width: 16px;
  height: 14px;
  margin-left: auto;
  background: linear-gradient(#a040e8 2px, #000 2px, #000 3px, #fff 3px);
  border: 1px solid #000;
}

.close {
  width: 11px;
  height: 11px;
}

.close svg {
  display: block;
}

/* forms */
.forms {
  display: flex;
  align-items: flex-start;
  gap: 1px;
}

fieldset {
  min-width: 0;
  margin: 0;
  padding: 3px 2px 2px;
  border: 1px solid #a0a0a0;
}

legend {
  height: 13px;
  margin-left: 3px;
  padding: 0 1px;
}

.fit {
  width: fit-content;
}

.row {
  display: flex;
  gap: 3px;
}

.row + .row {
  margin-top: 4px;
}

.field {
  display: flex;
  gap: 2px;
  min-width: 0;
  height: 15px;
  line-height: 15px;
  white-space: nowrap;
}

.field input[type="text"] {
  flex: 1;
  min-width: 0;
  height: 15px;
  padding: 0 1px;
  border: 1px solid #858585;
  border-radius: 0;
  background: linear-gradient(135deg, transparent 50%, #6fa3cf 50%) right bottom / 5px 5px no-repeat #fff;
}

.field input::placeholder {
  color: #808080;
}

.field .right {
  text-align: right;
}

.checkfield {
  display: flex;
  justify-content: center;
  width: 25px;
  height: 15px;
  border: 1px solid #858585;
  background: linear-gradient(135deg, transparent 50%, #6fa3cf 50%) right bottom / 5px 5px no-repeat #fff;
}

input[type="checkbox"] {
  appearance: none;
  display: block;
  flex: none;
  width: 12px;
  height: 12px;
  background: #fff;
  border: 1px solid #707070;
  border-right-color: #ddd;
  border-bottom-color: #ddd;
}

input[type="checkbox"]:checked::after {
  content: "";
  display: block;
  width: 7px;
  height: 4px;
  margin: 2px 0 0 1px;
  border: solid #000;
  border-width: 0 0 2px 2px;
  transform: rotate(-48deg);
}

.f-posted { width: 78px; }
.f-operation { width: 242px; }
.f-numerator { width: 108px; }
.f-number { width: 84px; }
.f-series { width: 60px; }
.f-docdate { width: 157px; }
.f-doctime { width: 155px; }
.f-from { width: 106px; }
.f-todate { width: 115px; }
.f-totime { width: 112px; }

.params {
  display: grid;
  grid-template-columns: 135px 197px 252px;
  gap: 4px 7px;
  padding-right: 4px;
}

.extra {
  width: 176px;
}

/* tabs */
.tabs {
  display: flex;
  align-items: flex-end;
  height: 21px;
  flex-shrink: 0;
  padding-left: 3px;
}

.tabs button {
  height: 16px;
  padding: 0 3px;
  border-top: 1px solid #fff;
  border-left: 1px solid #fff;
  border-right: 2px solid #707070;
}

.tabs .selected {
  height: 18px;
  padding-bottom: 3px;
}

.tabs.small {
  height: 18px;
}

.panel {
  display: flex;
  flex-direction: column;
  flex: 1;
  min-height: 0;
  border: 1px solid #fff;
  border-right: 2px solid #707070;
  border-bottom: 2px solid #707070;
}

.filters {
  display: flex;
  gap: 1px;
}

.g-store { width: 227px; }
.g-store .field { width: 205px; }
.g-filters { flex: 1; }
.f-price { flex: none; width: 239px; }
.f-maker { flex: none; width: 180px; }
.f-supplier { flex: 1; }
.g-dates { width: 225px; }
.g-dates .row { gap: 8px; }
.g-dates .field { width: 99px; }

.split {
  display: flex;
  flex: 1;
  min-height: 0;
}

.groups-pane {
  display: flex;
  flex-direction: column;
  gap: 2px;
  width: 266px;
  padding: 3px 0 2px;
}

.groups-pane .row .field {
  flex: 1;
  padding-left: 2px;
}

.groups {
  flex: 1;
  min-height: 0;
  padding-top: 0;
  padding-bottom: 0;
}

.groups-body {
  display: flex;
  flex-direction: column;
  height: 100%;
  padding-left: 1px;
}

.groups-view {
  flex: 1;
  overflow: hidden;
  background: #fff;
  border-left: 1px solid #707070;
  border-top: 1px solid #707070;
}

table {
  table-layout: fixed;
  border-collapse: separate;
  border-spacing: 0;
}

th {
  height: 33px;
  padding: 3px 2px 0;
  vertical-align: top;
  font-weight: normal;
  background: #f0f0f0;
  border-right: 1px solid #808080;
  border-bottom: 1px solid #808080;
  box-shadow: inset 1px 1px 0 #fff;
}

.sort {
  width: 9px;
  height: 8px;
}

.groups-table { width: 420px; }
.groups-table .c-tree { width: 79px; }
.groups-table .c-sort { width: 20px; }
.groups-table .c-title { text-align: left; padding-left: 138px; white-space: nowrap; }
.c-title .sort { margin-right: 4px; }

.groups-table td {
  height: 18px;
  padding: 0 1px;
  background: #f8f8ff;
  border-right: 1px solid #808080;
  border-bottom: 1px solid #9c9ce8;
}

.node {
  display: flex;
  align-items: center;
  padding-left: 3px;
}

.expander {
  width: 9px;
  height: 9px;
  border: 1px solid #777;
  background: linear-gradient(#000, #000) center / 5px 1px no-repeat, linear-gradient(#000, #000) center / 1px 5px no-repeat #fff;
}

.dots {
  width: 6px;
  border-top: 1px dotted #777;
}

.folder-icon {
  width: 13px;
  height: 15px;
  background: linear-gradient(100deg, #d7b84b 15%, #fff3a8 40%, #e3c659 60%, #dcbb50);
  border-radius: 1px;
}

.groups-bar {
  display: flex;
  align-items: center;
  justify-content: space-between;
  height: 28px;
  padding-right: 3px;
}

.check {
  display: flex;
  align-items: center;
  gap: 3px;
}

.icon-btn {
  display: grid;
  place-items: center;
  width: 20px;
  height: 20px;
}

.icon-btn svg {
  width: 14px;
  height: 14px;
}

.splitter {
  width: 4px;
  margin: 0 2px 3px;
  border: 1px solid #a0a0a0;
  border-width: 0 1px;
}

.sku-pane {
  display: flex;
  flex-direction: column;
  flex: 1;
  min-width: 0;
  padding: 3px 2px 3px 0;
}

.sku-body {
  flex: 1;
  border: 1px solid #fff;
  border-right: 2px solid #707070;
  border-bottom: 2px solid #707070;
  padding: 2px 2px 1px 1px;
}

.sku-view {
  display: flex;
  background: #fff;
  border: 1px solid #707070;
  border-width: 1px 0 0 1px;
}

.sku { flex: 1; min-width: 0; }
.w-on { width: 38px; }
.w-code { width: 98px; }
.w-id { width: 107px; }
.w-unit { width: 41px; }
.w-rest { width: 97px; }

.sku .l { text-align: left; }
.sku .name { vertical-align: middle; padding-bottom: 11px; }

.sku .filtered {
  background: linear-gradient(135deg, transparent 50%, #6fa3cf 50%) right bottom / 5px 5px no-repeat #f0f0f0;
}

.sku th:last-child {
  display: block;
  overflow: hidden;
}

.sku td {
  height: 15px;
  padding: 0 2px;
  line-height: 14px;
  white-space: nowrap;
  border-right: 1px solid #808080;
  border-bottom: 1px solid #808080;
}

.sku td input { margin: 0 auto; }
.sku td:nth-child(n+6) { text-align: right; }
.sku td:last-child { background: #ffeba5; }
.sku tr:last-child td { border-bottom-color: #fff; }
.sku tr:has(+ .current) td { border-bottom-color: #7c7ce0; }

.sku .current td {
  background: #f8f8ff;
  border-bottom-color: #9c9ce8;
}

.sku .current td:last-child { background: #f9e3a4; }

.sku-v {
  margin-left: 1px;
  padding-top: 34px;
  background: #f0f0f0;
}

.sku-bar {
  display: flex;
  align-items: center;
  gap: 4px;
  height: 29px;
}

.btn-group {
  display: flex;
  margin-right: 1px;
}

.push { margin-left: auto; }

.combo {
  display: flex;
  width: 87px;
  height: 21px;
  border: 1px solid #707070;
  background: #fff;
}

.combo select {
  appearance: none;
  flex: 1;
  min-width: 0;
  padding: 0 1px;
  border: 0;
  background: none;
}

.combo .arrow {
  height: 19px;
  pointer-events: none;
}

.btn {
  display: flex;
  align-items: center;
  justify-content: center;
  gap: 4px;
  height: 22px;
  white-space: nowrap;
}

.btn-icon {
  width: 11px;
  height: 11px;
}

.b-add { width: 99px; }
.b-copy { width: 119px; }
.b-edit { width: 129px; }

/* bottom */
.actions {
  display: flex;
  justify-content: flex-end;
  gap: 4px;
  padding: 4px 2px 2px;
}

.actions .btn { height: 25px; }
.b-refresh { width: 27px; }
.b-refresh svg { width: 14px; height: 14px; }
.b-save { width: 147px; background: #0f0; }
.b-post { width: 143px; }
.b-close { width: 127px; }

.pages {
  display: flex;
  height: 24px;
}

.pages button {
  display: flex;
  align-items: center;
  gap: 9px;
  padding: 0 4px 0 7px;
  border-right: 1px solid #ccc;
}

.pages .selected {
  padding: 0 6px;
  background: linear-gradient(#bcbcbc, #dadada);
}

/* red callouts */
.mark {
  position: absolute;
  border: 3px solid #ed1c24;
  pointer-events: none;
}

.m-operation { left: 81px; top: 30px; width: 250px; height: 24px; }
.m-number { left: 111px; top: 52px; width: 92px; height: 22px; }
.m-dateto { left: 218px; top: 82px; width: 123px; height: 29px; }
.m-contract { left: 0; top: 135px; width: 147px; height: 30px; }
.m-tab { left: 191px; top: 167px; width: 50px; height: 26px; }
.m-checks { left: 278px; top: 299px; width: 37px; height: 123px; }

.num {
  position: absolute;
  color: #ed1c24;
  font: bold 18px/18px "Liberation Sans", sans-serif;
}

.n-5 { left: 336px; top: 32px; }
.n-6 { left: 345px; top: 74px; }
.n-6a { left: 150px; top: 156px; font: bold 16px/18px "Open Sans", sans-serif; }
.n-7 { left: 253px; top: 355px; }
```
